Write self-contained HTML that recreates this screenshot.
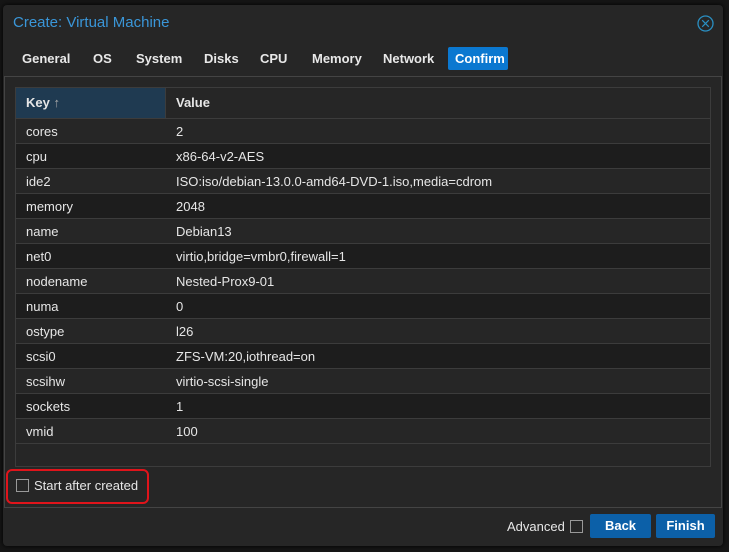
<!DOCTYPE html>
<html><head><meta charset="utf-8"><style>
*{box-sizing:border-box;margin:0;padding:0}
body{width:729px;height:552px;background:#161616;font-family:"Liberation Sans",Arial,sans-serif;font-size:13px;color:#e6e6e6;position:relative;overflow:hidden}
.win{position:absolute;left:3px;top:5px;width:720px;height:541px;background:#262626;border-radius:4px;box-shadow:0 0 6px #000}
.abs{position:absolute}
.title{left:10px;top:9px;font-size:15px;color:#3a96d8}
.tab{position:absolute;top:42px;height:23px;line-height:23px;font-weight:bold;font-size:13px;color:#e8e8e8;padding:0 7px;border-radius:2px}
.body{left:1px;top:71px;width:718px;height:432px;border:1px solid #444;border-bottom:1px solid #444}
.grid{left:12px;top:82px;width:696px;height:380px;border:1px solid #3c3c3c;background:#262626}
.hdr{height:31px;display:flex;border-bottom:1px solid #3c3c3c}
.hk{width:150px;background:#1f3a51;padding-left:10px;line-height:30px;font-weight:bold;border-right:1px solid #3c3c3c}
.hv{flex:1;background:#262626;padding-left:10px;line-height:30px;font-weight:bold}
.row{height:25px;border-bottom:1px solid #3c3c3c;display:flex;line-height:26px}
.k{width:150px;padding-left:10px}
.v{padding-left:10px}
.btn{position:absolute;height:24px;line-height:24px;background:#0c60a8;color:#fff;font-weight:bold;text-align:center;border-radius:2px}
.cb{position:absolute;width:13px;height:13px;border:1px solid #999;background:#262626}
</style></head><body>
<div class="win">
<div class="abs title">Create: Virtual Machine</div>
<svg class="abs" style="left:694px;top:10px" width="17" height="17" viewBox="0 0 17 17"><circle cx="8.5" cy="8.5" r="7.5" fill="none" stroke="#2a8fc2" stroke-width="1.3"/><path d="M5.2 5.2L11.8 11.8M11.8 5.2L5.2 11.8" stroke="#2a8fc2" stroke-width="1.2"/></svg>
<div class="tab" style="left:12px">General</div>
<div class="tab" style="left:83px">OS</div>
<div class="tab" style="left:126px">System</div>
<div class="tab" style="left:194px">Disks</div>
<div class="tab" style="left:250px">CPU</div>
<div class="tab" style="left:302px">Memory</div>
<div class="tab" style="left:373px">Network</div>
<div class="tab" style="left:445px;width:60px;background:#0b78d0;color:#fff">Confirm</div>
<div class="abs body"></div>
</div>
<div class="abs grid" style="left:15px;top:87px;width:696px">
<div class="hdr"><div class="hk">Key <span style="font-weight:normal;color:#aaa">↑</span></div><div class="hv">Value</div></div>
<div>
<div class="row" style="background:#262626"><div class="k">cores</div><div class="v">2</div></div>
<div class="row" style="background:#1d1d1d"><div class="k">cpu</div><div class="v">x86-64-v2-AES</div></div>
<div class="row" style="background:#262626"><div class="k">ide2</div><div class="v">ISO:iso/debian-13.0.0-amd64-DVD-1.iso,media=cdrom</div></div>
<div class="row" style="background:#1d1d1d"><div class="k">memory</div><div class="v">2048</div></div>
<div class="row" style="background:#262626"><div class="k">name</div><div class="v">Debian13</div></div>
<div class="row" style="background:#1d1d1d"><div class="k">net0</div><div class="v">virtio,bridge=vmbr0,firewall=1</div></div>
<div class="row" style="background:#262626"><div class="k">nodename</div><div class="v">Nested-Prox9-01</div></div>
<div class="row" style="background:#1d1d1d"><div class="k">numa</div><div class="v">0</div></div>
<div class="row" style="background:#262626"><div class="k">ostype</div><div class="v">l26</div></div>
<div class="row" style="background:#1d1d1d"><div class="k">scsi0</div><div class="v">ZFS-VM:20,iothread=on</div></div>
<div class="row" style="background:#262626"><div class="k">scsihw</div><div class="v">virtio-scsi-single</div></div>
<div class="row" style="background:#1d1d1d"><div class="k">sockets</div><div class="v">1</div></div>
<div class="row" style="background:#262626"><div class="k">vmid</div><div class="v">100</div></div>
</div>
</div>
<div class="abs" style="left:6px;top:469px;width:143px;height:35px;border:2px solid #e0141b;border-radius:6px"></div>
<div class="cb" style="left:16px;top:479px"></div>
<div class="abs" style="left:34px;top:478px;color:#e6e6e6">Start after created</div>
<div class="abs" style="left:507px;top:519px">Advanced</div>
<div class="cb" style="left:570px;top:520px"></div>
<div class="btn" style="left:590px;top:514px;width:61px">Back</div>
<div class="btn" style="left:656px;top:514px;width:59px">Finish</div>
</body></html>
